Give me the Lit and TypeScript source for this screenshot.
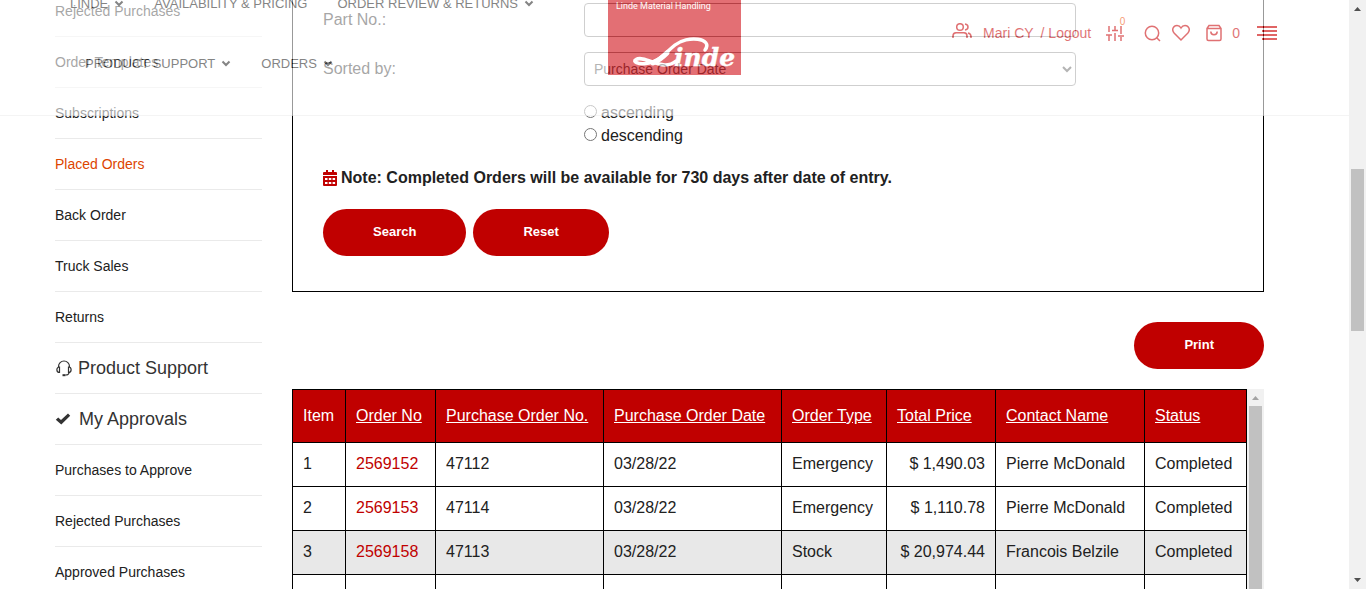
import { LitElement, html, css, svg, nothing } from "lit";
import { customElement } from "lit/decorators.js";
import { classMap } from "lit/directives/class-map.js";

interface Order {
  item: string;
  no: string;
  po: string;
  date: string;
  type: string;
  total: string;
  contact: string;
  status: string;
}

const ORDERS: Order[] = [
  { item: "1", no: "2569152", po: "47112", date: "03/28/22", type: "Emergency", total: "$ 1,490.03", contact: "Pierre McDonald", status: "Completed" },
  { item: "2", no: "2569153", po: "47114", date: "03/28/22", type: "Emergency", total: "$ 1,110.78", contact: "Pierre McDonald", status: "Completed" },
  { item: "3", no: "2569158", po: "47113", date: "03/28/22", type: "Stock", total: "$ 20,974.44", contact: "Francois Belzile", status: "Completed" },
  { item: "4", no: "", po: "", date: "", type: "", total: "$ 985.20", contact: "", status: "" },
];

const COLUMNS = [
  { label: "Order No", cls: "c-no" },
  { label: "Purchase Order No.", cls: "c-po" },
  { label: "Purchase Order Date", cls: "c-date" },
  { label: "Order Type", cls: "c-type" },
  { label: "Total Price", cls: "c-total" },
  { label: "Contact Name", cls: "c-contact" },
  { label: "Status", cls: "c-status" },
];

const chevron = html`<svg class="chev" width="10" height="8" viewBox="0 0 10 8" fill="none" stroke="currentColor" stroke-width="2"><path d="M1.500 2.500 5 6 8.500 2.500" /></svg>`;

const headset = html`<svg width="18" height="18" viewBox="0 0 18 18" fill="none" stroke="currentColor" stroke-width="1.200">
  <path d="M3.500 8V7.500a5.500 5.500 0 0 1 11 0V8M4.500 8C1 8 1 13.500 4.500 13.500ZM13.500 8C17 8 17 13.500 13.500 13.500ZM14 13.500c0 1.500-1.500 2.500-3.500 2.500" />
  <path d="M7.500 16.200h3" stroke-width="2" /></svg>`;

const check = html`<svg width="19" height="18" viewBox="0 0 19 18"><path fill="currentColor" d="M.8 9.800 3.200 7.600 6 10.100 13 3.600l2.200 2.200L6.300 14.600Z" /></svg>`;

@customElement("scroll-track")
export class ScrollTrack extends LitElement {
  static properties = { inner: { type: Boolean } };
  declare inner: boolean;

  static styles = css`
    :host {
      display: flex;
      flex-direction: column;
      align-items: center;
      width: 17px;
      background: #f1f1f1;
      color: #505050;
    }
    svg { flex: none; display: block; }
    .lead { flex: 152 0 0; }
    .thumb { flex: 162 0 0; width: 13px; background: #c1c1c1; }
    .rest { flex: 241 0 0; }
    .muted { color: #a3a3a3; }
    .full { flex: 1; }
  `;

  render() {
    const up = svg`<path d="M5 11 8.500 7 12 11Z" fill="currentColor" />`;
    if (this.inner) {
      return html`<svg class="muted" width="17" height="17">${up}</svg>
        <div class="thumb full"></div>`;
    }
    return html`<svg width="17" height="17">${up}</svg>
      <div class="lead"></div>
      <div class="thumb"></div>
      <div class="rest"></div>
      <svg width="17" height="17"><path d="M5 6h7L8.500 10Z" fill="currentColor" /></svg>`;
  }
}

@customElement("site-header")
export class SiteHeader extends LitElement {
  static styles = css`
    :host {
      display: grid;
      grid-template-columns: minmax(0, 1fr) 134px minmax(0, 1fr);
      height: 116px;
      padding: 0 72px 0 70px;
      box-sizing: border-box;
      overflow: hidden;
      background: #fff;
      border-bottom: 1px solid #eee;
      opacity: 0.6;
    }
    a { color: inherit; text-decoration: none; }
    nav {
      margin-top: -27px;
      color: #333;
      font-size: 13px;
    }
    .row { display: flex; height: 60px; align-items: center; gap: 30px; white-space: nowrap; }
    .second { padding-left: 15px; }
    .row a { display: flex; align-items: center; gap: 6px; }
    .chev { display: block; }
    .logo { display: block; }
    .tools {
      display: flex;
      justify-content: flex-end;
      align-items: center;
      height: 66px;
      color: #cc1417;
      font-size: 14px;
      white-space: nowrap;
    }
    .tools svg { display: block; fill: none; stroke: currentColor; stroke-width: 1.5; }
    .user { display: flex; align-items: center; gap: 11px; }
    .logout { margin-left: 7px; }
    .compare { position: relative; margin-left: 14px; }
    .badge { position: absolute; top: -8px; right: 0; font-size: 10px; color: #f05a10; }
    .find { margin-left: 19px; }
    .heart { margin-left: 11px; }
    .cart { display: flex; align-items: center; gap: 9px; margin-left: 15px; }
    .menu { margin-left: 17px; padding: 0; border: 0; background: none; color: #c00; }
  `;

  private link(label: string, more = true) {
    return html`<a href="#">${label}${more ? chevron : nothing}</a>`;
  }

  render() {
    return html`
      <nav aria-label="Main">
        <div class="row">
          ${this.link("LINDE")}${this.link("AVAILABILITY & PRICING", false)}${this.link("ORDER REVIEW & RETURNS")}
        </div>
        <div class="row second">${this.link("PRODUCT SUPPORT")}${this.link("ORDERS")}</div>
      </nav>
      <a href="#" aria-label="Linde home">
        <svg class="logo" width="134" height="75" viewBox="0 0 134 75">
          <rect x="1" width="133" height="75" fill="#d21119" />
          <text x="9" y="9" fill="#fff" font-size="9" font-family="Roboto, sans-serif">Linde Material Handling</text>
          <g fill="none" stroke="#fff" stroke-linecap="round">
            <path stroke-width="3.500" d="M98 50C107 38 80 35 68 45 58 53 51 63 39 63.500c-8 1-14-2-10-4 5-3 14 2 23 4.500 7 2 12 1 17-3" />
            <path stroke-width="5" d="M60 53C55 58 51 61 46 63" />
          </g>
          <text x="67" y="66" fill="#fff" stroke="#fff" stroke-width=".4" font-size="25" font-weight="bold" font-style="italic" font-family="DejaVu Serif, serif">inde</text>
        </svg>
      </a>
      <div class="tools">
        <a class="user" href="#">
          <svg width="20" height="20" viewBox="0 0 20 20"><circle cx="8" cy="4" r="3.300" /><path d="M1 15v-2q0-3 3-3.200h8q3 .2 3 3.200v2M13 1q3 .5 3 3t-3 3M16 10q3 .8 3 3.500V15" /></svg>
          Mari CY
        </a>
        <a class="logout" href="#">/ Logout</a>
        <a class="compare" href="#" aria-label="Compare">
          <svg width="20" height="18" viewBox="0 0 20 18"><path d="M4 2v6M4 11v6M10 2v4M10 9v8M16 2v8M16 13v4M1 11h6M7 6.500h6M13 12h6" /></svg>
          <span class="badge">0</span>
        </a>
        <a class="find" href="#" aria-label="Search"><svg width="17" height="17" viewBox="0 0 17 17"><circle cx="8" cy="8" r="6.700" /><path d="m12.500 12.500 3.500 3.500" /></svg></a>
        <a class="heart" href="#" aria-label="Wishlist"><svg width="18" height="18" viewBox="0 0 18 18"><path d="M9 16 2.300 9.200C-1 5.500 1.500 1.500 5 1.500c2 0 3.200 1.100 4 2.500.8-1.400 2-2.500 4-2.500 3.500 0 6 4 2.700 7.700Z" /></svg></a>
        <a class="cart" href="#">
          <svg width="18" height="18" viewBox="0 0 18 18"><path d="M2 4.500 4 1.500h10l2 3V15q0 1.500-1.500 1.500h-11Q2 16.500 2 15ZM2 4.500h14M5.800 7.500c0 4.200 6.400 4.200 6.400 0" /></svg>
          0
        </a>
        <button class="menu" aria-label="Menu"><svg width="20" height="16" viewBox="0 0 20 16"><path stroke-width="2" d="M0 2h20M5 6h15M0 10h20M5 14h15" /></svg></button>
      </div>
    `;
  }
}

@customElement("order-search")
export class OrderSearch extends LitElement {
  static styles = css`
    :host {
      display: block;
      border: 1px solid #000;
      border-top: 0;
      padding: 3px 30px 35px;
    }
    .field {
      display: grid;
      grid-template-columns: 261px minmax(0, 492px);
      align-items: center;
      margin-bottom: 15px;
    }
    .box {
      box-sizing: border-box;
      width: 100%;
      height: 34px;
      border: 1px solid #888;
      border-radius: 4px;
      background: #fff;
      color: #444;
      font: 14px "Liberation Sans", Arial, sans-serif;
      padding: 0 5px;
    }
    fieldset { border: 0; margin: 0 0 0 261px; padding: 0; }
    .choice { display: flex; align-items: center; gap: 4px; height: 23px; }
    .choice input { margin: 0 0 2px; width: 13px; height: 13px; }
    .note {
      display: flex;
      align-items: center;
      gap: 4px;
      height: 24px;
      margin: 19px 0;
      font-weight: bold;
    }
    .note svg { color: #c00000; }
    .actions { display: flex; gap: 7px; }
    .btn {
      height: 47px;
      padding: 0 50px 2px;
      border: 0;
      border-radius: 24px;
      background: #c00000;
      color: #fff;
      font: bold 13px "Liberation Sans", Arial, sans-serif;
    }
  `;

  render() {
    return html`
      <div class="field">
        <label for="part">Part No.:</label>
        <input class="box" id="part" type="text" />
      </div>
      <div class="field">
        <label for="sort">Sorted by:</label>
        <select class="box" id="sort"><option>Purchase Order Date</option></select>
      </div>
      <fieldset aria-label="Direction">
        <label class="choice"><input type="radio" name="dir" />ascending</label>
        <label class="choice"><input type="radio" name="dir" />descending</label>
      </fieldset>
      <p class="note">
        <svg width="14" height="16" viewBox="0 0 14 16">
          <path fill="currentColor" d="M3 0h2v2h4V0h2v2h2q1 0 1 1v2H0V3q0-1 1-1h2ZM0 6h14v9q0 1-1 1H1q-1 0-1-1Z" />
          <path fill="#fff" d="M2 8h2.500v2H2ZM5.800 8h2.500v2H5.800ZM9.600 8h2.500v2H9.600ZM2 12h2.500v2H2ZM5.800 12h2.500v2H5.800ZM9.600 12h2.500v2H9.600Z" />
        </svg>
        Note: Completed Orders will be available for 730 days after date of entry.
      </p>
      <div class="actions">
        <button class="btn">Search</button>
        <button class="btn">Reset</button>
      </div>
    `;
  }
}

@customElement("order-table")
export class OrderTable extends LitElement {
  static styles = css`
    :host { display: flex; }
    .wrap { flex: 1; min-width: 0; }
    table { width: 100%; table-layout: fixed; border-collapse: collapse; }
    th, td {
      box-sizing: border-box;
      border: 1px solid #000;
      padding: 0 10px;
      text-align: left;
      white-space: nowrap;
    }
    th { height: 53px; padding-right: 0; background: #c00000; color: #fff; font-weight: normal; }
    th a { color: #fff; }
    td { height: 44px; padding-bottom: 2px; }
    td a { color: #c00000; text-decoration: none; }
    .shade { background: #e8e8e8; }
    .money { text-align: right; }
    .c-item { width: 53px; }
    .c-no { width: 90px; }
    .c-po { width: 168px; }
    .c-date { width: 178px; }
    .c-type { width: 105px; }
    .c-total { width: 109px; }
    .c-contact { width: 149px; }
    .c-status { width: 102px; }
  `;

  render() {
    return html`
      <div class="wrap">
        <table>
          <thead>
            <tr>
              <th class="c-item">Item</th>
              ${COLUMNS.map((c) => html`<th class=${c.cls}><a href="#">${c.label}</a></th>`)}
            </tr>
          </thead>
          <tbody>
            ${ORDERS.map(
              (o) => html`<tr class=${classMap({ shade: o.item === "3" })}>
                <td>${o.item}</td>
                <td><a href="#">${o.no}</a></td>
                <td>${o.po}</td>
                <td>${o.date}</td>
                <td>${o.type}</td>
                <td class="money">${o.total}</td>
                <td>${o.contact}</td>
                <td>${o.status}</td>
              </tr>`
            )}
          </tbody>
        </table>
      </div>
      <scroll-track inner></scroll-track>
    `;
  }
}

@customElement("app-root")
export class AppRoot extends LitElement {
  static styles = css`
    :host {
      display: grid;
      grid-template-columns: minmax(0, 1fr) 17px;
      height: 100vh;
      overflow: hidden;
      background: #fff;
      color: #212121;
      font: 16px "Liberation Sans", Arial, sans-serif;
    }
    .view { position: relative; overflow: hidden; }
    .top { position: absolute; top: 0; left: 0; right: 0; }
    .page {
      display: grid;
      grid-template-columns: 207px minmax(0, 1fr);
      gap: 30px;
      align-items: start;
      padding: 0 85px 0 55px;
    }
    .side { margin-top: -14px; font-size: 14px; }
    .side a {
      display: flex;
      align-items: center;
      height: 50px;
      border-bottom: 1px solid #eaeaea;
      color: #212121;
      text-decoration: none;
    }
    .side .active { color: #dd4400; }
    .side .head { gap: 5px; font-size: 18px; color: #333; }
    .print { display: flex; justify-content: flex-end; margin: 30px 0 20px; }
    .btn {
      height: 47px;
      padding: 0 50px 2px;
      border: 0;
      border-radius: 24px;
      background: #c00000;
      color: #fff;
      font: bold 13px "Liberation Sans", Arial, sans-serif;
    }
  `;

  private entry(label: string) {
    return html`<a class=${classMap({ active: label === "Placed Orders" })} href="#">${label}</a>`;
  }

  render() {
    return html`
      <div class="view">
        <div class="page">
          <nav class="side" aria-label="Account">
            ${["Rejected Purchases", "Order Templates", "Subscriptions", "Placed Orders", "Back Order", "Truck Sales", "Returns"].map((l) => this.entry(l))}
            <a class="head" href="#">${headset}Product Support</a>
            <a class="head" href="#">${check} My Approvals</a>
            ${["Purchases to Approve", "Rejected Purchases", "Approved Purchases"].map((l) => this.entry(l))}
          </nav>
          <main>
            <order-search></order-search>
            <div class="print"><button class="btn">Print</button></div>
            <order-table></order-table>
          </main>
        </div>
        <site-header class="top"></site-header>
      </div>
      <scroll-track></scroll-track>
    `;
  }
}
